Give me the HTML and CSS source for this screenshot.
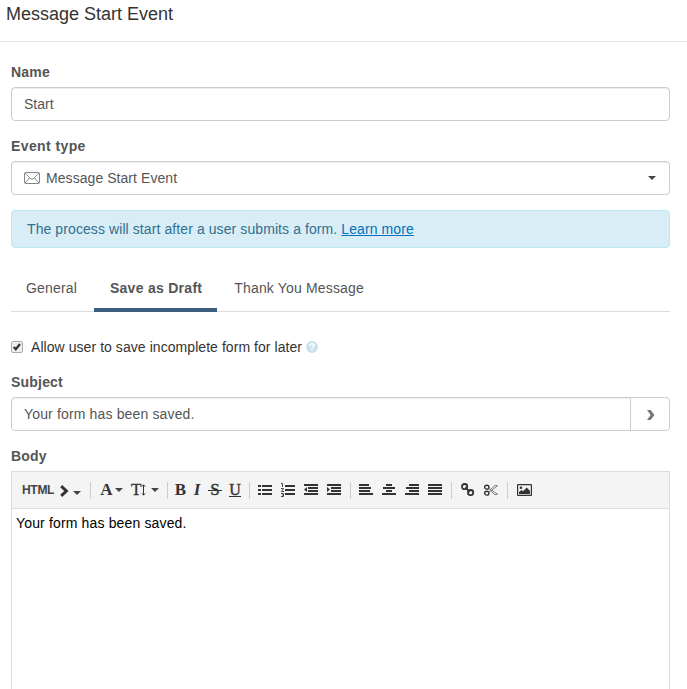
FILE: index.html
```html
<!DOCTYPE html>
<html lang="en">
<head>
    <meta charset="UTF-8">
    <meta name="viewport" content="width=device-width, initial-scale=1.0">
    <title>Message Start Event</title>
    <link rel="stylesheet" href="styles.css">
</head>
<body>
    <header class="panel-header">
        <h1>Message Start Event</h1>
    </header>

    <form class="panel-body">
        <div class="form-group">
            <label for="name">Name</label>
            <input type="text" id="name" class="form-control" value="Start">
        </div>

        <div class="form-group">
            <label class="type-label">Event type</label>
            <div class="form-control select">
                <svg class="envelope" width="16" height="12" viewBox="0 0 16 12">
                    <rect x="0.5" y="0.5" width="15" height="11" rx="1"/>
                    <path d="M1 1l5.5 5.7q1.5 1.4 3 0L15 1M1 11l4.6-5M15 11l-4.6-5"/>
                </svg>
                <span class="select-text">Message Start Event</span>
                <i class="caret"></i>
            </div>
        </div>

        <div class="alert">The process will start after a user submits a form. <a href="#">Learn more</a></div>

        <!-- Tabs -->
        <nav class="tabs">
            <a class="tab">General</a>
            <a class="tab active">Save as Draft</a>
            <a class="tab">Thank You Message</a>
        </nav>

        <div class="check-row">
            <svg class="checkbox" width="12" height="12" viewBox="0 0 12 12">
                <rect class="box" x="0.5" y="0.5" width="11" height="11" rx="1.5"/>
                <path d="M2.8 6l2 2.3L9 3"/>
            </svg>
            <span class="check-text">Allow user to save incomplete form for later</span>
            <svg class="help" width="12" height="12" viewBox="0 0 12 12">
                <circle cx="6" cy="6" r="6"/>
                <path d="M4 4.7q0-1.9 2-1.9t2 1.7q0 1-1.1 1.4-.9.4-.9 1.1M6 8.1v1.5"/>
            </svg>
        </div>

        <div class="form-group">
            <label for="subject">Subject</label>
            <div class="input-group">
                <input type="text" id="subject" class="form-control" value="Your form has been saved.">
                <button type="button" class="addon">
                    <svg width="8" height="10" viewBox="0 0 8 10"><path d="M0 0h3.6L7.5 5 3.6 10H0l3.6-5z"/></svg>
                </button>
            </div>
        </div>

        <div class="body-group">
            <label>Body</label>
            <div class="editor">
                <!-- Toolbar -->
                <div class="toolbar">
                    <span class="tool html">HTML</span>
                    <svg class="chevron" width="9" height="12" viewBox="0 0 9 12"><path d="M1.2 1.2L6.4 6l-5.2 4.8"/></svg>
                    <i class="caret low"></i>
                    <i class="sep"></i>
                    <span class="tool glyph color">A</span>
                    <i class="caret"></i>
                    <span class="tool glyph size">T</span>
                    <svg class="updown" width="5" height="12" viewBox="0 0 5 12"><path d="M2.5 1v10M.8 2.6L2.5.8l1.7 1.8M.8 9.4l1.7 1.8 1.7-1.8"/></svg>
                    <i class="caret wide"></i>
                    <i class="sep"></i>
                    <span class="tool glyph bold">B</span>
                    <span class="tool glyph italic">I</span>
                    <span class="tool glyph strike">S</span>
                    <span class="tool glyph underline">U</span>
                    <i class="sep"></i>
                    <div class="tools">
                        <svg width="14" height="14" viewBox="0 0 14 14"><path d="M0 2h3v2H0zM4 2h10v2H4zM0 6h3v2H0zM4 6h10v2H4zM0 10h3v2H0zM4 10h10v2H4z"/></svg>
                        <svg width="14" height="14" viewBox="0 0 14 14"><path d="M4 2h10v2H4zM4 6h10v2H4zM4 10h10v2H4z"/><path class="thin" d="M0 .5h1.5V4M0 5.5h2.5L.5 8.5H3M0 10.5h2.5v3H0M1 12h1.5"/></svg>
                        <svg width="14" height="14" viewBox="0 0 14 14"><path d="M0 1h14v2H0zM4 4h10v2H4zM4 7h10v2H4zM0 10h14v2H0zM3 4v5L0 6.5z"/></svg>
                        <svg width="14" height="14" viewBox="0 0 14 14"><path d="M0 1h14v2H0zM4 4h10v2H4zM4 7h10v2H4zM0 10h14v2H0zM0 4v5l3-2.5z"/></svg>
                    </div>
                    <i class="sep"></i>
                    <div class="tools">
                        <svg width="14" height="14" viewBox="0 0 14 14"><path d="M0 1h10v2H0zM0 4h12v2H0zM0 7h11v2H0zM0 10h14v2H0z"/></svg>
                        <svg width="14" height="14" viewBox="0 0 14 14"><path d="M4 1h6v2H4zM1 4h12v2H1zM4 7h6v2H4zM0 10h14v2H0z"/></svg>
                        <svg width="14" height="14" viewBox="0 0 14 14"><path d="M4 1h10v2H4zM1 4h13v2H1zM4 7h10v2H4zM0 10h14v2H0z"/></svg>
                        <svg width="14" height="14" viewBox="0 0 14 14"><path d="M0 1h14v2H0zM0 4h14v2H0zM0 7h14v2H0zM0 10h14v2H0z"/></svg>
                    </div>
                    <i class="sep"></i>
                    <div class="tools links">
                        <svg width="14" height="14" viewBox="0 0 14 14"><g class="link"><rect x="1" y="1" width="5.2" height="5.2" rx="2.4"/><rect x="7" y="7" width="5.2" height="5.2" rx="2.4"/><path d="M4.4 4.4l4.4 4.4"/></g></svg>
                        <svg width="14" height="14" viewBox="0 0 14 14"><g class="cut"><ellipse cx="2.8" cy="4.2" rx="2.1" ry="1.9"/><ellipse cx="2.8" cy="10.2" rx="2.1" ry="1.9"/></g><path class="blade" d="M4.6 5.4L8 7.5l5.6 3.6-2.6.6L6.6 8M4.6 9L8 6.9l5.6-4.1-2.6-.4L6.6 6.4"/></svg>
                    </div>
                    <i class="sep"></i>
                    <svg class="image" width="15" height="12" viewBox="0 0 15 12"><rect class="frame" x="0.6" y="0.6" width="13.8" height="10.8" rx="0.5"/><circle cx="4" cy="3.7" r="1.3"/><path d="M2 10V8l2.5-2L6 7.3 9.8 3.5 13 7v3z"/></svg>
                </div>
                <div class="editor-content">Your form has been saved.</div>
            </div>
        </div>
    </form>
</body>
</html>
```
FILE: styles.css
```css
* {
    box-sizing: border-box;
}

body {
    margin: 0;
    font-family: "Liberation Sans", Arial, sans-serif;
    font-size: 14px;
    line-height: 20px;
    color: #555;
    background: #fff;
}

.panel-header {
    height: 42px;
    padding: 4px 6px;
    border-bottom: 1px solid #e2e2e2;
}

h1 {
    margin: 0;
    font-size: 18px;
    font-weight: normal;
    line-height: 20px;
    color: #333;
}

.panel-body {
    padding: 20px 17px 0 11px;
}

.form-group {
    margin-bottom: 15px;
}

label {
    display: block;
    margin-bottom: 5px;
    font-weight: bold;
    letter-spacing: 0.2px;
}

.type-label {
    letter-spacing: 0.4px;
}

.form-control {
    display: block;
    width: 100%;
    height: 34px;
    padding: 6px 12px;
    border: 1px solid #ccc;
    border-radius: 4px;
    box-shadow: inset 0 1px 1px rgba(0, 0, 0, 0.075);
    font: inherit;
    color: #555;
    background: #fff;
}

.select {
    display: flex;
    align-items: center;
}

.select-text {
    flex: 1;
    margin-left: 6px;
    letter-spacing: 0.06px;
}

.envelope {
    fill: none;
    stroke: #777;
    stroke-width: 0.9;
}

.caret {
    border-top: 4px solid #444;
    border-left: 4px solid transparent;
    border-right: 4px solid transparent;
}

.select .caret {
    margin-right: 1px;
}

.alert {
    height: 38px;
    padding: 8px 15px;
    border: 1px solid #bce8f1;
    border-radius: 4px;
    background: #d9edf7;
    color: #31708f;
    letter-spacing: 0.09px;
}

.alert a {
    color: #0072bc;
}

.tabs {
    display: flex;
    height: 64px;
    padding-top: 16px;
    border-bottom: 1px solid #ddd;
    letter-spacing: 0.16px;
}

.tab {
    height: 48px;
    padding: 14px 15px 0;
    margin-right: 2px;
}

.tab.active {
    padding: 14px 15px 0 16px;
    border-bottom: 4px solid #3b5f7c;
    font-weight: bold;
    letter-spacing: 0.28px;
}

.check-row {
    display: flex;
    align-items: center;
    height: 20px;
    margin: 25px 0 15px;
    color: #333;
}

.checkbox {
    fill: none;
    stroke: #333;
    stroke-width: 2.2;
}

.checkbox .box {
    fill: #eee;
    stroke: #aaa;
    stroke-width: 1;
}

.check-text {
    margin: 0 4px 0 8px;
    letter-spacing: 0.06px;
}

.help {
    fill: #c9e1ec;
}

.help path {
    fill: none;
    stroke: #fff;
    stroke-width: 1.5;
}

.input-group {
    display: flex;
}

.input-group .form-control {
    flex: 1;
    border-radius: 4px 0 0 4px;
    letter-spacing: 0.15px;
}

.addon {
    display: flex;
    align-items: center;
    justify-content: center;
    width: 40px;
    height: 34px;
    margin-left: -1px;
    padding: 2px 0 0 1px;
    border: 1px solid #ccc;
    border-radius: 0 4px 4px 0;
    background: #fff;
    fill: #777;
}

.editor {
    height: 218px;
    border: 1px solid #ddd;
    border-bottom: 0;
}

.toolbar {
    display: flex;
    align-items: center;
    height: 37px;
    padding-left: 10px;
    border-bottom: 1px solid #ddd;
    background: #f4f4f4;
    color: #333;
    fill: #333;
}

.sep {
    width: 1px;
    height: 17px;
    margin: 1px 8px 0;
    background: #ccc;
}

.tools {
    display: flex;
    gap: 9px;
    margin-right: 1px;
}

.html {
    width: 38px;
    font-size: 12px;
    font-weight: bold;
    letter-spacing: -0.3px;
    color: #444;
}

.chevron {
    margin-top: 2px;
    fill: none;
    stroke: #333;
    stroke-width: 3;
}

.low {
    margin: 5px 1px 0 4px;
}

.glyph {
    font-family: "Liberation Serif", serif;
    font-size: 17px;
    text-align: center;
}

.color {
    width: 15px;
    margin-right: 1px;
    font-weight: bold;
}

.size {
    width: 10px;
    margin-left: 8px;
    -webkit-text-stroke: 0.3px #333;
}

.updown {
    fill: none;
    stroke: #333;
    stroke-width: 1;
}

.wide {
    margin-left: 5px;
}

.bold {
    width: 25px;
    margin-left: -8px;
    font-weight: bold;
}

.italic {
    width: 8px;
    font-style: italic;
    font-weight: bold;
}

.strike {
    width: 14px;
    height: 20px;
    margin: 0 7px;
    background: linear-gradient(#333, #333) 0 10px / 100% 1px no-repeat;
    -webkit-text-stroke: 0.4px #333;
}

.underline {
    width: 12px;
    height: 16px;
    margin-bottom: 2px;
    border-bottom: 1px solid #333;
    font-size: 16px;
    line-height: 17px;
    -webkit-text-stroke: 0.4px #333;
}

.thin,
.cut,
.blade,
.link {
    fill: none;
    stroke: #333;
    stroke-width: 0.9;
}

.blade {
    stroke: #666;
    stroke-width: 0.8;
}

.cut {
    stroke-width: 1.4;
}

.link {
    stroke-width: 1.8;
}

.links {
    margin-left: 1px;
}

.image {
    margin-left: 1px;
}

.frame {
    fill: none;
    stroke: #333;
    stroke-width: 1.2;
}

.editor-content {
    padding: 4px;
    color: #000;
    letter-spacing: 0.15px;
}
```
